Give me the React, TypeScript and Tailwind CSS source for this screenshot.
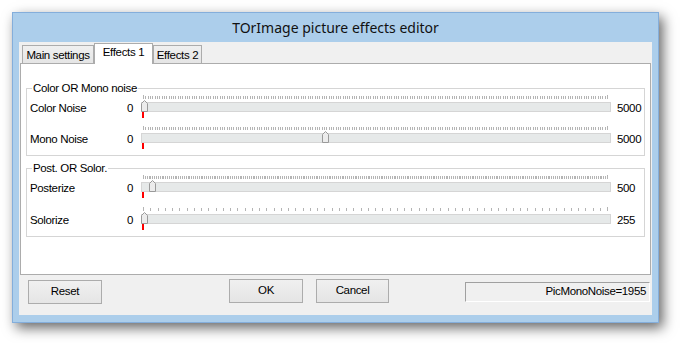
type SliderProps = {
  label: string;
  value: number;
  min: number;
  max: number;
  ticks: number;
};

const TRACK_W = 470;

const Ticks = ({ count }: { count: number }) => {
  const lines = [];
  for (let i = 0; i <= count; i++) {
    const x = Math.round(2 + (i * (TRACK_W - 6)) / count) + 0.5;
    const end = i === 0 || i === count;
    lines.push(
      <line key={i} x1={x} x2={x} y1={end ? 0 : 1} y2={4} stroke="#b4b4b4" strokeWidth={1} />
    );
  }
  return (
    <svg width={TRACK_W} height={4} className="block">
      {lines}
    </svg>
  );
};

const Thumb = ({ left }: { left: number }) => (
  <svg width={7} height={12} className="absolute top-[-3px]" style={{ left }}>
    <path d="M3.5 0.5 L6.5 3.5 L6.5 11.5 L0.5 11.5 L0.5 3.5 Z" fill="#ececec" stroke="#9a9a9a" />
  </svg>
);

const SliderRow = ({ label, value, min, max, ticks }: SliderProps) => {
  // thumb position inside the track
  const left = Math.round(((value - min) / (max - min)) * (TRACK_W - 7)) - 1;

  return (
    <div className="flex h-[29px] items-start">
      <div className="mt-[7px] flex w-[114px] justify-between pl-[3px] pr-[8px] leading-[12px]">
        <span>{label}</span>
        <span>{min}</span>
      </div>
      <div className="flex w-[470px] flex-col">
        <Ticks count={ticks} />
        <div className="relative mt-[3px] h-[10px] border border-[#d5d5d5] bg-[#e6e9e9]">
          <Thumb left={left} />
        </div>
        <div className="ml-[1px] h-[6px] w-[2px] bg-[#ff0000]" />
      </div>
      <div className="ml-[6px] mt-[7px] leading-[12px]">{max}</div>
    </div>
  );
};

const GroupBox = ({ title, children, gap }: { title: string; children: React.ReactNode; gap: string }) => (
  <fieldset className="border border-[#d5d5d5] pt-[1px]">
    <legend className="ml-[5px] px-[1px] leading-[12px]">{title}</legend>
    <div className={`flex flex-col ${gap}`}>{children}</div>
  </fieldset>
);

const Button = ({ label, width, className }: { label: string; width: string; className: string }) => (
  <div
    className={`flex h-[24px] ${width} ${className} items-center justify-center border border-[#acacac] bg-gradient-to-b from-[#f0f0f0] to-[#e5e5e5]`}
  >
    {label}
  </div>
);

export default function App() {
  return (
    <div className="h-[343px] w-[680px] overflow-hidden bg-white pl-[12px] pt-[12px] font-['Liberation_Sans',Arial,sans-serif] text-[11.5px] tracking-[-0.35px] text-black">
      <div className="flex h-[311px] w-[647px] flex-col border border-[#84aedb] bg-[#acceeb] shadow-[4px_5px_12px_rgba(0,0,0,0.6)]">
        {/* Title bar */}
        <div className="flex h-[29px] items-center justify-center font-['Noto_Sans',sans-serif] text-[14px] tracking-normal text-[#111]">
          TOrImage picture effects editor
        </div>

        {/* Client area */}
        <div className="mx-[6px] mb-[7px] flex flex-1 flex-col bg-[#f0f0f0] px-[1px] pt-[1px]">
          {/* Tabs */}
          <div className="flex h-[20px] items-end pl-[2px]">
            <div className="flex h-[18px] w-[72px] justify-center border border-b-0 border-[#acacac] bg-gradient-to-b from-[#f0f0f0] to-[#e5e5e5] pt-[3px] leading-[12px]">
              Main settings
            </div>
            <div className="relative z-10 mb-[-1px] flex h-[21px] w-[59px] justify-center border border-b-0 border-[#acacac] bg-white pt-[2px] leading-[12px]">
              Effects 1
            </div>
            <div className="flex h-[18px] w-[49px] justify-center border border-b-0 border-[#acacac] bg-gradient-to-b from-[#f0f0f0] to-[#e5e5e5] pt-[3px] leading-[12px]">
              Effects 2
            </div>
          </div>

          {/* Tab panel */}
          <div className="flex h-[212px] flex-col border border-[#acacac] bg-white px-[5px] pt-[18px]">
            <GroupBox title="Color OR Mono noise" gap="gap-[2px]">
              <SliderRow label="Color Noise" value={0} min={0} max={5000} ticks={200} />
              <SliderRow label="Mono Noise" value={1955} min={0} max={5000} ticks={200} />
            </GroupBox>
            <div className="mt-[6px]">
              <GroupBox title="Post. OR Solor." gap="gap-[3px]">
                <SliderRow label="Posterize" value={9} min={0} max={500} ticks={250} />
                <SliderRow label="Solorize" value={0} min={0} max={255} ticks={64} />
              </GroupBox>
            </div>
          </div>

          {/* Bottom buttons */}
          <div className="flex items-start pt-[5px]">
            <Button label="Reset" width="w-[74px]" className="ml-[8px]" />
            <Button label="OK" width="w-[74px]" className="ml-[127px] mt-[-1px]" />
            <Button label="Cancel" width="w-[73px]" className="ml-[13px] mt-[-1px]" />
            <div className="ml-[76px] mt-[2px] flex h-[20px] w-[185px] items-center justify-end border border-[#a0a0a0] border-b-white border-r-white pr-[3px]">
              PicMonoNoise=1955
            </div>
          </div>
        </div>
      </div>
    </div>
  );
}
